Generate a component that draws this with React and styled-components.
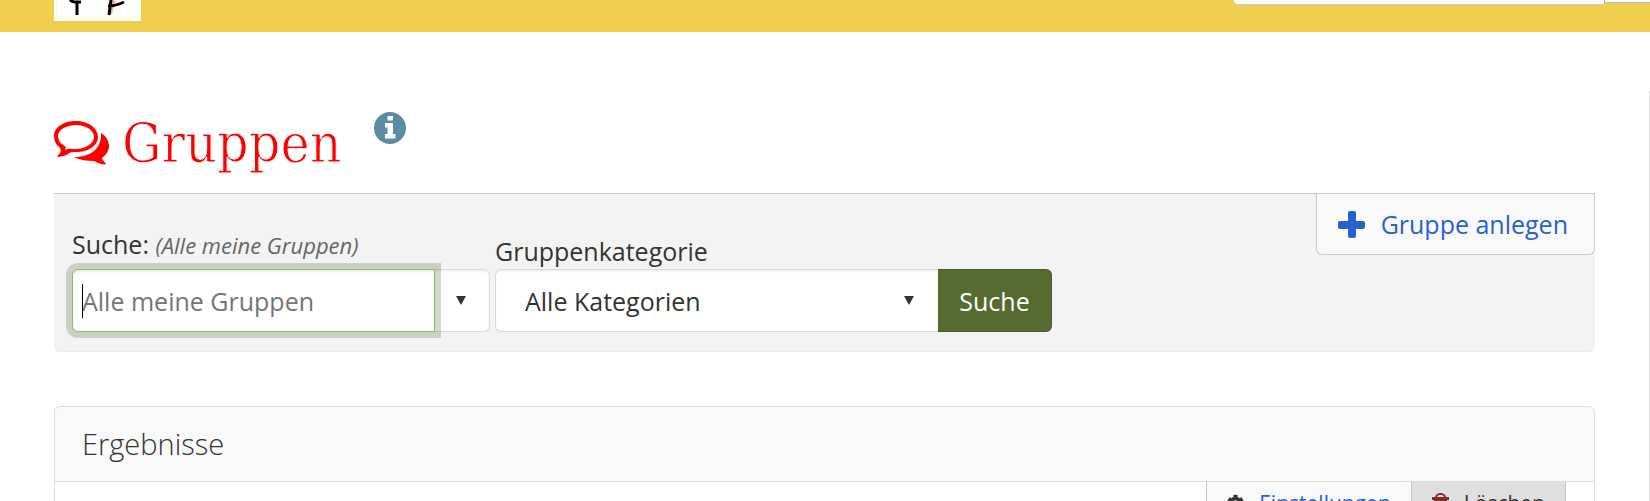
import React, { useState } from 'react'
import styled, { createGlobalStyle } from 'styled-components'
import { FaCog } from 'react-icons/fa'

const App = () => {
  const [search, setSearch] = useState('')
  const [category, setCategory] = useState('all')

  return (
    <>
      <GlobalStyle />
      <Header>
        <Logo viewBox='0 0 87 21' aria-label='Logo'>
          <path d='M60 0L56 14' stroke='#f5b5b0' strokeWidth='4' />
          <path d='M16 0C19 3 23 2 27 2M23 1L23 15' />
          <path d='M57 0L55 15M54 6C61 6 66 4 70 2' />
        </Logo>
        <HeaderSearch>
          <HeaderInput type='search' aria-label='Suche in der Seite' />
          <HeaderButton type='button' aria-label='Suchen' />
        </HeaderSearch>
      </Header>
      <Layout>
        <Main>
          <Title>
            <svg viewBox='0 0 56 44' aria-hidden='true'>
              <path
                fillRule='evenodd'
                d='M22 0C34 0 44 7 44 16C44 25 34 31 22 31C19 31 16 31 14 33C11 35 8 35 4 36C3 36 4 34 6 32C7 31 7 29 6 27C2 24 0 20 0 15C0 6 10 0 22 0ZM22 4C12 4 4 9 4 15C4 21 8 23 12 26L11 29C14 27 17 28 22 28C32 28 40 22 40 16C40 9 32 4 22 4Z'
              />
              <path d='M47 12C52 15 55 20 55 25C55 30 52 34 48 37C48 39 52 42 52 43C51 44 45 43 40 40C33 40 26 39 20 36C35 36 48 29 47 12Z' />
            </svg>
            <h1>Gruppen</h1>
            <button type='button' aria-label='Information'>
              <svg viewBox='0 0 32 32'>
                <circle cx='16' cy='16' r='16' />
                <path fill='#fff' d='M13.5 4H19V8.5H13.5ZM11 11H19V22H21.5V26.5H11V22H13.5V15.5H11Z' />
              </svg>
            </button>
          </Title>
          <Filter>
            <Form onSubmit={(e) => e.preventDefault()}>
              <Field>
                <label htmlFor='search'>
                  Suche: <em>(Alle meine Gruppen)</em>
                </label>
                <Combo>
                  <SearchInput
                    id='search'
                    type='text'
                    placeholder='Alle meine Gruppen'
                    value={search}
                    onChange={(e) => setSearch(e.target.value)}
                  />
                  <Caret />
                  <Toggle type='button' aria-label='Suche auswählen'>
                    <Arrow />
                  </Toggle>
                </Combo>
              </Field>
              <Field>
                <label htmlFor='category'>Gruppenkategorie</label>
                <SelectBox>
                  <select id='category' value={category} onChange={(e) => setCategory(e.target.value)}>
                    <option value='all'>Alle Kategorien</option>
                  </select>
                  <Arrow />
                </SelectBox>
              </Field>
              <Submit type='submit'>Suche</Submit>
            </Form>
            <CreateLink href='#anlegen'>
              <svg viewBox='0 0 27 27' aria-hidden='true'>
                <rect x='10' width='8' height='27' rx='2' />
                <rect y='10' width='27' height='8' rx='2' />
              </svg>
              Gruppe anlegen
            </CreateLink>
          </Filter>
          <Results>
            <h2>Ergebnisse</h2>
            <Actions>
              <Action href='#einstellungen'>
                <FaCog />
                Einstellungen
              </Action>
              <Action href='#loeschen' $muted>
                <svg viewBox='0 0 17 20' aria-hidden='true'>
                  <path
                    fillRule='evenodd'
                    d='M0 4H3C4 1 6 0 8 0H9C11 0 13 1 14 4H17V7H15L14 20H3L2 7H0ZM5 4H12C11 2 10 2 9 2H8C7 2 6 2 5 4ZM5 8V18H6V8ZM8 8V18H9V8ZM11 8V18H12V8Z'
                  />
                </svg>
                Löschen
              </Action>
            </Actions>
          </Results>
        </Main>
        <Sidebar />
      </Layout>
    </>
  )
}

const GlobalStyle = createGlobalStyle`
  * {
    box-sizing: border-box;
    margin: 0;
  }
  body {
    margin: 0;
    overflow-x: hidden;
    background: #fff;
    color: #333;
    font-family: 'Open Sans', sans-serif;
    font-size: 25px;
    line-height: 36px;
  }
  button, input, select {
    font: inherit;
    color: inherit;
  }
`

const Header = styled.header`
  display: flex;
  justify-content: space-between;
  height: 32px;
  padding-left: 54px;
  background: #f0cf4e;
`

const Logo = styled.svg`
  width: 87px;
  height: 21px;
  background: #fefefc;
  fill: none;
  stroke: #000;
  stroke-width: 3px;
`

const HeaderSearch = styled.div`
  display: flex;
  align-items: flex-start;
  width: 417px;
`

const HeaderInput = styled.input`
  flex: 1;
  min-width: 0;
  height: 5px;
  padding: 0;
  border: 1px solid #ccc;
  border-top: 0;
  border-right: 0;
  border-radius: 0 0 0 6px;
  background: #fff;
`

const HeaderButton = styled.button`
  width: 46px;
  height: 3px;
  padding: 0;
  border: 1px solid #bbb;
  border-width: 0 0 1px 1px;
  background: #f9f9f9;
`

const Layout = styled.div`
  display: flex;
`

const Main = styled.main`
  flex: 1;
  min-width: 0;
  padding: 80px 54px 0;
`

const Title = styled.div`
  display: flex;
  height: 81px;
  color: #f00;
  svg {
    fill: currentColor;
  }
  > svg {
    width: 56px;
    height: 44px;
    margin-top: 9px;
  }
  h1 {
    margin-left: 12px;
    font-family: 'Roboto Slab', 'DejaVu Serif Condensed', 'DejaVu Serif', serif;
    font-size: 55px;
    font-weight: 100;
    line-height: 62px;
    /* white outline keeps the strokes thin */
    -webkit-text-stroke: 1px #fff;
  }
  button {
    width: 32px;
    height: 32px;
    margin-left: 32px;
    padding: 0;
    border: 0;
    background: none;
    color: #5b8ca5;
  }
  button svg {
    display: block;
    width: 32px;
    height: 32px;
  }
`

const Filter = styled.section`
  display: flex;
  justify-content: space-between;
  align-items: flex-start;
  border: 0 solid #ebebeb;
  border-top: 1px solid #c8c8c8;
  border-bottom-width: 1px;
  border-radius: 0 0 6px 6px;
  background: #f3f3f3;
`

const Form = styled.form`
  display: flex;
  align-items: flex-end;
  padding: 32px 18px 19px;
`

const Field = styled.div`
  display: flex;
  flex-direction: column;
  + div {
    margin-left: 5px;
  }
  em {
    color: #666;
    font-size: 22px;
  }
  label {
    color: #333;
  }
`

const Combo = styled.div`
  position: relative;
  display: flex;
  width: 418px;
  height: 63px;
  margin-top: 6px;
`

const SearchInput = styled.input`
  flex: 1;
  min-width: 0;
  padding: 0 9px;
  border: 1px solid #92b95f;
  border-radius: 6px 0 0 6px;
  outline: none;
  background: #fff;
  box-shadow: inset 0 2px 2px rgba(0, 0, 0, 0.08), 0 0 0 6px rgba(85, 107, 47, 0.25);
  z-index: 1;
  &::placeholder {
    color: #757575;
    opacity: 1;
  }
`

const Caret = styled.span`
  position: absolute;
  z-index: 2;
  top: 15px;
  left: 10px;
  width: 1px;
  height: 34px;
  background: #000;
`

const Toggle = styled.button`
  display: flex;
  align-items: center;
  justify-content: center;
  width: 55px;
  padding: 0 2px 0 0;
  border: 1px solid #d8d8d8;
  border-left: 0;
  border-radius: 0 6px 6px 0;
  background: #fff;
  box-shadow: inset 0 2px 2px rgba(0, 0, 0, 0.05);
`

const Arrow = styled.span`
  border: 5px solid transparent;
  border-top: 9px solid #333;
  border-bottom: 0;
`

const SelectBox = styled.div`
  display: grid;
  grid-template-columns: 1fr 34px;
  align-items: center;
  width: 443px;
  height: 63px;
  select {
    grid-area: 1 / 1 / 2 / 3;
    height: 63px;
    padding: 0 29px;
    appearance: none;
    border: 1px solid #d8d8d8;
    border-right: 0;
    border-radius: 6px 0 0 6px;
    background: #fff;
    box-shadow: inset 0 2px 2px rgba(0, 0, 0, 0.05);
  }
  span {
    grid-area: 1 / 2;
    justify-self: start;
    pointer-events: none;
  }
`

const Submit = styled.button`
  width: 114px;
  height: 63px;
  padding: 0;
  border: 1px solid #4a5d29;
  border-left: 0;
  border-radius: 0 6px 6px 0;
  background: #556b2f;
  color: #fff;
`

const CreateLink = styled.a`
  display: flex;
  align-items: center;
  gap: 16px;
  height: 61px;
  padding: 0 26px 0 21px;
  border: 1px solid #c8c8c8;
  border-top: 0;
  border-radius: 0 0 6px 6px;
  background: #f9f9f9;
  color: #2860d0;
  text-decoration: none;
  white-space: nowrap;
  svg {
    width: 27px;
    height: 27px;
    fill: currentColor;
  }
`

const Results = styled.section`
  margin-top: 54px;
  border: 1px solid #ddd;
  border-radius: 6px 6px 0 0;
  h2 {
    padding: 19px 27px;
    border-radius: 6px 6px 0 0;
    background: #f9f9f9;
    font-size: 29px;
    font-weight: 300;
    line-height: 36px;
  }
`

const Actions = styled.div`
  display: flex;
  justify-content: flex-end;
  padding-right: 28px;
  border-top: 1px solid #ddd;
`

const Action = styled.a`
  display: flex;
  align-items: center;
  gap: 15px;
  height: 42px;
  padding: 0 20px;
  border: 1px solid #c8c8c8;
  border-width: 0 0 1px 1px;
  border-right-width: ${(props) => (props.$muted ? '1px' : '0')};
  border-radius: ${(props) => (props.$muted ? '0' : '0 6px 0 0')};
  background: ${(props) => (props.$muted ? '#dfdfdf' : '#f9f9f9')};
  color: ${(props) => (props.$muted ? '#333' : '#2860d0')};
  font-size: 21px;
  text-decoration: none;
  svg {
    width: 17px;
    height: 20px;
    fill: ${(props) => (props.$muted ? '#7c2f2c' : '#333')};
  }
`

const Sidebar = styled.aside`
  width: 1px;
  margin-top: 59px;
  background: #ddd;
`

export default App
